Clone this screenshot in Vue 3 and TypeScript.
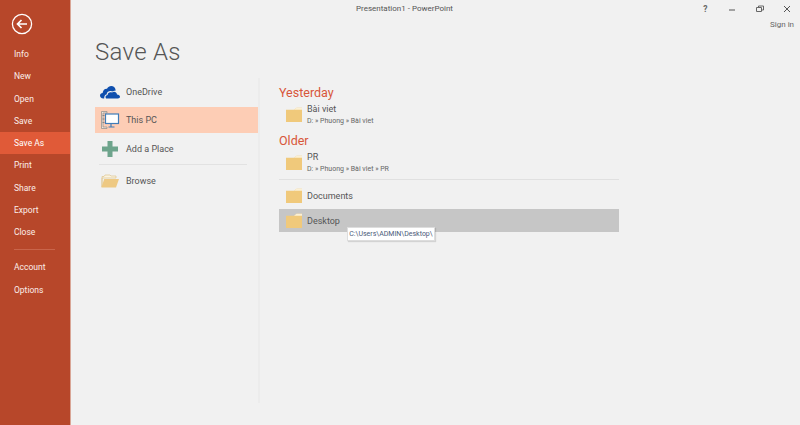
<script setup lang="ts">
const navTop: string[] = ['Info', 'New', 'Open', 'Save', 'Save As', 'Print', 'Share', 'Export', 'Close']
const navBottom: string[] = ['Account', 'Options']
</script>

<template>
  <div class="app">
    <aside class="side">
      <div class="back">
        <svg width="22" height="22" viewBox="0 0 22 22">
          <circle cx="11" cy="11" r="9.6" fill="none" stroke="#fff" stroke-width="1.3" />
          <path d="M16 11H6.5M10.5 7L6.5 11L10.5 15" fill="none" stroke="#fff" stroke-width="1.7" />
        </svg>
      </div>
      <div v-for="n in navTop" :key="n" class="nav" :class="{ on: n === 'Save As' }">{{ n }}</div>
      <div class="nav-sep"></div>
      <div v-for="n in navBottom" :key="n" class="nav">{{ n }}</div>
    </aside>

    <main class="main">
      <header class="top">
        <div class="title">Presentation1 - PowerPoint</div>
        <div class="wc">
          <span class="help">?</span>
          <svg width="8" height="8" viewBox="0 0 8 8"><path d="M1 5h6" stroke="#555" stroke-width="1" /></svg>
          <svg width="8" height="8" viewBox="0 0 8 8"><path d="M0.5 2.5h5v4h-5zM2.5 2.5v-1.5h5v4h-2" fill="none" stroke="#666" stroke-width="1" /></svg>
          <svg width="8" height="8" viewBox="0 0 8 8"><path d="M1 1l6 6M7 1l-6 6" stroke="#555" stroke-width="1" /></svg>
        </div>
        <div class="signin">Sign in</div>
      </header>

      <h1 class="head">Save As</h1>

      <div class="cols">
        <section class="places">
          <div class="place first">
            <svg width="20" height="14" viewBox="0 0 20 14">
              <path d="M3.5 13.5C1 13.5 0 12 0 10.6C0 9 1.2 8 2.6 7.9C3 5 5 3.4 7 3.7C8 1.8 9.6 1 11.2 1C13.6 1 15.2 2.6 15.6 5C15.6 5 16 5.2 16 5.2L12 6.5C10.5 5.6 7 6 6.6 9.4C5 9.6 4 11 4.2 13.5Z" fill="#0f4fae" />
              <path d="M6 13.5C5 12 5.6 10.2 7.6 10C7.8 7.6 10 6.6 12 7.6C14 6 16.6 7 17 9.4C18.8 9.5 20 10.6 20 11.8C20 13 19 13.5 18 13.5Z" fill="#0f4fae" />
            </svg>
            <span>OneDrive</span>
          </div>
          <div class="place sel">
            <svg width="18" height="18" viewBox="0 0 18 18">
              <path d="M0.5 0.5H6V2H2V16H6V17.5H0.5Z" fill="#f3e5da" stroke="#8a8a8a" stroke-width="0.7" />
              <path d="M1.5 4.5h2M1.5 8h2M1.5 11.5h2" stroke="#777" stroke-width="0.8" />
              <rect x="4.5" y="3" width="13" height="9.5" fill="#fff" stroke="#3f7cb8" stroke-width="1.2" />
              <path d="M10 13v2.5M7.5 16h6" stroke="#3f7cb8" stroke-width="1.2" />
            </svg>
            <span>This PC</span>
          </div>
          <div class="place add">
            <svg width="16" height="16" viewBox="0 0 16 16">
              <path d="M5.5 0H10.5V5.5H16V10.5H10.5V16H5.5V10.5H0V5.5H5.5Z" fill="#6ea48c" />
            </svg>
            <span>Add a Place</span>
          </div>
          <div class="place-sep"></div>
          <div class="place browse">
            <svg width="18" height="14" viewBox="0 0 18 14">
              <path d="M1 13V2.5H3L4 1H9L10 2H15V4H1Z" fill="#fbf3e0" stroke="#dcc48e" stroke-width="0.7" />
              <path d="M3.2 5H18L15 13.6H0.4Z" fill="#eec983" />
            </svg>
            <span>Browse</span>
          </div>
        </section>

        <section class="recent">
          <h2 class="group">Yesterday</h2>
          <div class="row two">
            <svg class="folder" width="16" height="15" viewBox="0 0 16 14" preserveAspectRatio="none">
              <path d="M0 2.6H8L10.6 0.8H16V14H0Z" fill="#f0c97b" />
              <path d="M10.6 0.8H16V2.6H8Z" fill="#fbf0d6" />
            </svg>
            <div>
              <div class="name">Bài viet</div>
              <div class="path">D: » Phuong » Bài viet</div>
            </div>
          </div>
          <h2 class="group older">Older</h2>
          <div class="row two">
            <svg class="folder" width="16" height="15" viewBox="0 0 16 14" preserveAspectRatio="none">
              <path d="M0 2.6H8L10.6 0.8H16V14H0Z" fill="#f0c97b" />
              <path d="M10.6 0.8H16V2.6H8Z" fill="#fbf0d6" />
            </svg>
            <div>
              <div class="name">PR</div>
              <div class="path">D: » Phuong » Bài viet » PR</div>
            </div>
          </div>
          <div class="row-sep"></div>
          <div class="row docs">
            <svg class="folder" width="16" height="15" viewBox="0 0 16 14" preserveAspectRatio="none">
              <path d="M0 2.6H8L10.6 0.8H16V14H0Z" fill="#f0c97b" />
              <path d="M10.6 0.8H16V2.6H8Z" fill="#fbf0d6" />
            </svg>
            <div class="name">Documents</div>
          </div>
          <div class="row hover">
            <svg class="folder" width="16" height="15" viewBox="0 0 16 14" preserveAspectRatio="none">
              <path d="M0 2.6H8L10.6 0.8H16V14H0Z" fill="#f0c97b" />
              <path d="M10.6 0.8H16V2.6H8Z" fill="#fbf0d6" />
            </svg>
            <div class="name">Desktop</div>
            <div class="tip">C:\Users\ADMIN\Desktop\</div>
          </div>
        </section>
      </div>
    </main>
  </div>
</template>

<style scoped>
.app {
  display: flex;
  width: 800px;
  height: 425px;
  overflow: hidden;
  background: #f1f1f1;
  font-family: Roboto, "Noto Sans", sans-serif;
  color: #444;
}
.side {
  width: 70px;
  flex: none;
  background: #b7472a;
  border-right: 1px solid #d9a696;
  color: #fff;
  display: flex;
  flex-direction: column;
  padding-top: 13px;
  box-sizing: content-box;
}
.back {
  height: 30px;
  padding-left: 11px;
}
.nav {
  height: 22.25px;
  line-height: 23px;
  padding-left: 14px;
  font-size: 8.5px;
  color: #fbeee9;
}
.nav.on {
  background: #e05a38;
  color: #fff;
}
.nav-sep {
  height: 1px;
  width: 41px;
  margin: 6px 0 6px 14px;
  background: #c9654b;
}
.main {
  flex: 1;
  min-width: 0;
  display: flex;
  flex-direction: column;
}
.top {
  position: relative;
  height: 37px;
  flex: none;
}
.title {
  position: absolute;
  left: 285px;
  top: 3px;
  font-size: 8px;
  line-height: 11px;
  color: #555;
}
.wc {
  position: absolute;
  right: 9px;
  top: 4px;
  display: flex;
  align-items: center;
  gap: 19.5px;
  height: 10px;
}
.help {
  font-size: 8.5px;
  font-weight: 700;
  color: #666;
  margin-right: 1px;
}
.signin {
  position: absolute;
  right: 6px;
  top: 19px;
  font-size: 8px;
  line-height: 11px;
  color: #666;
}
.head {
  margin: 0 0 0 24px;
  height: 39px;
  font-size: 24px;
  line-height: 30px;
  font-weight: 300;
  color: #555;
  letter-spacing: 0.3px;
}
.cols {
  display: flex;
  height: 325px;
  margin-top: 2px;
}
.places {
  width: 163px;
  margin-left: 24px;
  flex: none;
  border-right: 2px solid #ececec;
  box-sizing: content-box;
}
.place {
  height: 26px;
  display: flex;
  align-items: center;
  font-size: 9px;
  color: #555;
  padding-left: 5px;
  gap: 6px;
}
.place.first {
  height: 30px;
  margin-top: -1px;
}
.place svg {
  width: 20px;
  flex: none;
}
.place.sel {
  background: #fdcdb5;
}
.place.add {
  box-sizing: border-box;
  height: 30px;
  padding-top: 2px;
}
.place-sep {
  height: 1px;
  width: 148px;
  margin: 1px 0 0 4px;
  background: #e2e2e2;
}
.place.browse {
  height: 32px;
}
.recent {
  width: 340px;
  margin-left: 19px;
  margin-top: 7px;
}
.group {
  margin: 0;
  font-size: 12.5px;
  line-height: 16px;
  font-weight: 400;
  color: #d8563a;
}
.group.older {
  margin-top: 5px;
}
.row {
  position: relative;
  display: flex;
  align-items: center;
  height: 23px;
  padding-left: 6.5px;
  gap: 5.5px;
}
.row.two {
  height: 27px;
}
.row.docs {
  margin-bottom: 2px;
}
.row.hover {
  background: #c6c6c6;
}
.row-sep {
  height: 1px;
  margin: 3px 0 4px;
  background: #e0e0e0;
}
.folder {
  flex: none;
  width: 16px;
}
.name {
  font-size: 9px;
  line-height: 12px;
  color: #555;
}
.path {
  font-size: 7px;
  line-height: 12px;
  color: #666;
}
.tip {
  position: absolute;
  left: 68px;
  top: 18px;
  width: 88px;
  height: 14px;
  box-sizing: border-box;
  background: #fff;
  border: 1px solid #ddd;
  box-shadow: 1px 1px 1px rgba(0, 0, 0, 0.12);
  font-size: 7px;
  line-height: 12px;
  text-align: center;
  color: #4a5a78;
  white-space: nowrap;
}
</style>
